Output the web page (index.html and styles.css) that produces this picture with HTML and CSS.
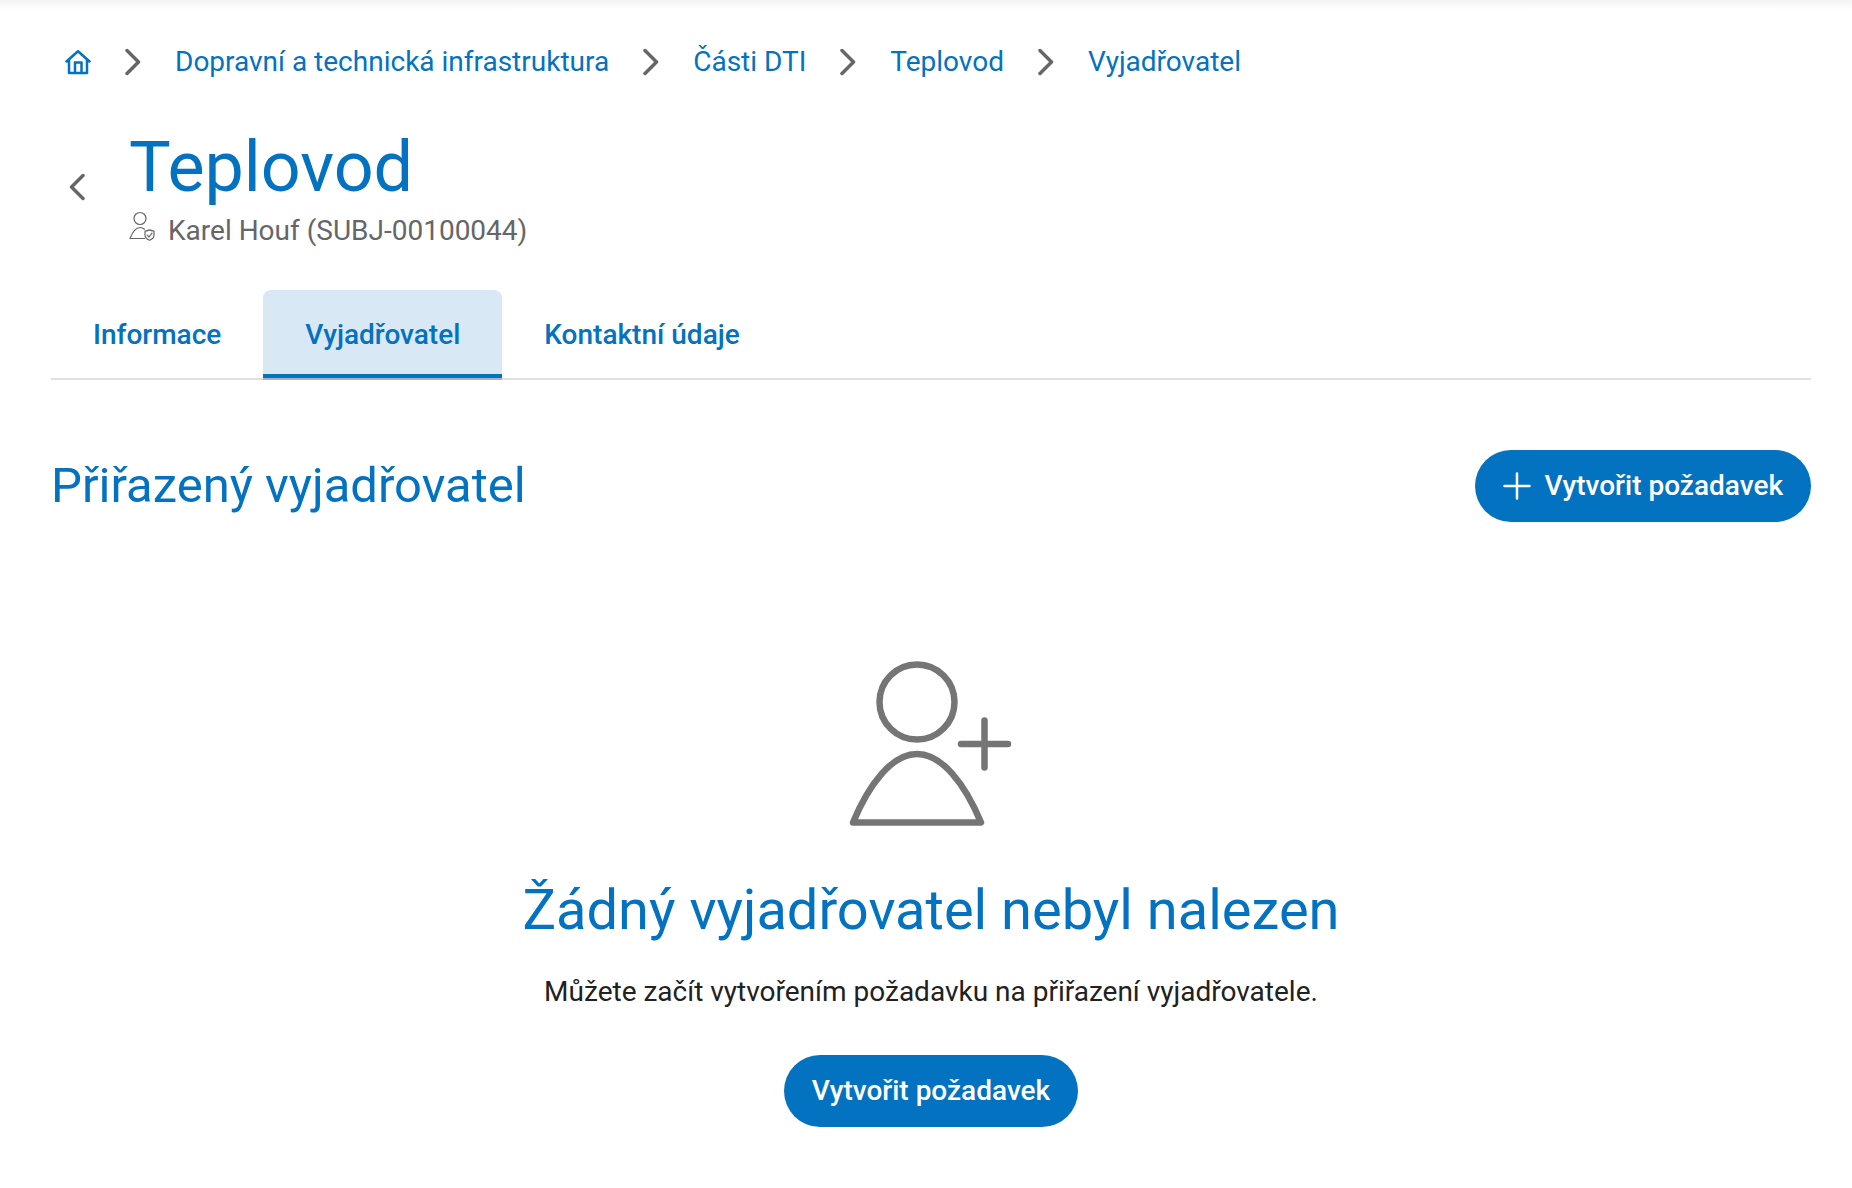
FILE: index.html
```html
<!doctype html>
<html lang="cs">
  <head>
    <meta charset="utf-8">
    <title>Teplovod</title>
    <link rel="stylesheet" href="styles.css">
  </head>
  <body>
    <main class="page">
      <nav class="breadcrumb" aria-label="Drobečková navigace">
        <a href="#" class="home" aria-label="Domů">
          <svg width="26" height="26" viewBox="0 0 26 26"><path d="M1.5 12.5 13 2.2 24.500 12.500M4 10.500V24H22V10.500M10 24V13.500H16.500V24"/></svg>
        </a>
        <svg class="arrow" width="16" height="28" viewBox="0 0 16 28"><path d="M2 2.500 13.500 14 2 25.500"/></svg>
        <a href="#">Dopravní a technická infrastruktura</a>
        <svg class="arrow" width="16" height="28" viewBox="0 0 16 28"><path d="M2 2.500 13.500 14 2 25.500"/></svg>
        <a href="#">Části DTI</a>
        <svg class="arrow" width="16" height="28" viewBox="0 0 16 28"><path d="M2 2.500 13.500 14 2 25.500"/></svg>
        <a href="#">Teplovod</a>
        <svg class="arrow" width="16" height="28" viewBox="0 0 16 28"><path d="M2 2.500 13.500 14 2 25.500"/></svg>
        <a href="#">Vyjadřovatel</a>
      </nav>

      <header class="header">
        <button type="button" class="back" aria-label="Zpět">
          <svg class="arrow" width="16" height="28" viewBox="0 0 16 28"><path d="M14 2.500 2.500 14 14 25.500"/></svg>
        </button>
        <div>
          <h1>Teplovod</h1>
          <p class="owner">
            <svg width="26" height="30" viewBox="0 0 26 30">
              <circle cx="11" cy="7.500" r="6"/>
              <path d="M15.500 27.500H1C3.500 21 6.500 16.500 11 16.500C12.800 16.500 14.200 17 15.500 18.200"/>
              <path d="M16 20C18 20 19 19.500 20.500 18.800C22 19.500 23 20 25 20V24C25 26.500 23 28.300 20.500 29.300C18 28.300 16 26.500 16 24Z"/>
              <path d="M18.200 24.200 20 26 23 22.200"/>
            </svg>
            <span>Karel Houf (SUBJ-00100044)</span>
          </p>
        </div>
      </header>

      <nav class="tabs">
        <a href="#">Informace</a>
        <a href="#" class="active" aria-current="page">Vyjadřovatel</a>
        <a href="#">Kontaktní údaje</a>
      </nav>

      <div class="section-head">
        <h2>Přiřazený vyjadřovatel</h2>
        <button type="button" class="btn">
          <svg width="28" height="28" viewBox="0 0 28 28"><path d="M14 1.500V26.500M1.500 14H26.500"/></svg>
          Vytvořit požadavek
        </button>
      </div>

      <section class="empty">
        <svg width="164" height="168" viewBox="0 0 164 168">
          <circle cx="68" cy="42" r="37.500"/>
          <path d="M4 162.500C20 124 43 94 68 94C93 94 116 124 132 162.500Z"/>
          <path d="M135.500 60.500V107.500M112 84H159"/>
        </svg>
        <h2>Žádný vyjadřovatel nebyl nalezen</h2>
        <p>Můžete začít vytvořením požadavku na přiřazení vyjadřovatele.</p>
        <button type="button" class="btn">Vytvořit požadavek</button>
      </section>
    </main>
  </body>
</html>
```
FILE: styles.css
```css
body{
  margin:0;
  background:#fff;
  color:#212121;
  font-family:Roboto, sans-serif;
  font-size:28px;
  line-height:40px;
}
h1, h2, p{margin:0;}
h1, h2{color:#0372c0; font-weight:400;}
a{color:#0372c0; text-decoration:none;}
svg{
  flex:none;
  fill:none;
  stroke:currentColor;
  stroke-linecap:round;
  stroke-linejoin:round;
}
button{border:0; font:inherit; cursor:pointer;}

.page{
  padding:42px 41px 60px 51px;
  background:linear-gradient(#f3f3f3, #fff 10px);
}

.breadcrumb{
  display:flex;
  align-items:center;
  gap:34px;
  padding-left:14px;
}
.home{display:flex;}
.home svg{stroke-width:2.5;}
.arrow{color:#666; stroke-width:3.5;}

.header{
  display:flex;
  align-items:center;
  margin-top:41px;
}
.back{
  display:flex;
  justify-content:center;
  width:52px;
  margin-right:26px;
  padding:0;
  background:none;
}
h1{font-size:70px; line-height:88px;}
.owner{
  display:flex;
  align-items:center;
  gap:13px;
  color:#666;
}
.owner svg{margin-bottom:10px; stroke-width:1.2;}

.tabs{
  display:flex;
  margin-top:39px;
  border-bottom:2px solid #e0e0e0;
}
.tabs a{
  padding:25px 42px 19px;
  border-bottom:4px solid transparent;
  border-radius:8px 8px 0 0;
  font-weight:500;
}
.tabs .active{
  background:#d9e8f5;
  border-color:#0372c0;
  box-shadow:0 2px #a9b3c2;
}

.section-head{
  display:flex;
  align-items:center;
  justify-content:space-between;
  margin-top:70px;
}
.section-head h2{font-size:49px; line-height:56px;}

.btn{
  display:flex;
  align-items:center;
  gap:14px;
  height:72px;
  padding:0 28px;
  border-radius:36px;
  background:#0372c0;
  color:#fff;
  font-weight:500;
}
.btn svg{stroke-width:2.5;}

.empty{
  display:flex;
  flex-direction:column;
  align-items:center;
  margin-top:138px;
  text-align:center;
}
.empty>svg{color:#757575; stroke-width:6.5;}
.empty h2{margin-top:49px; font-size:56px; line-height:66px;}
.empty p{margin:29px 0 43px;}
```
